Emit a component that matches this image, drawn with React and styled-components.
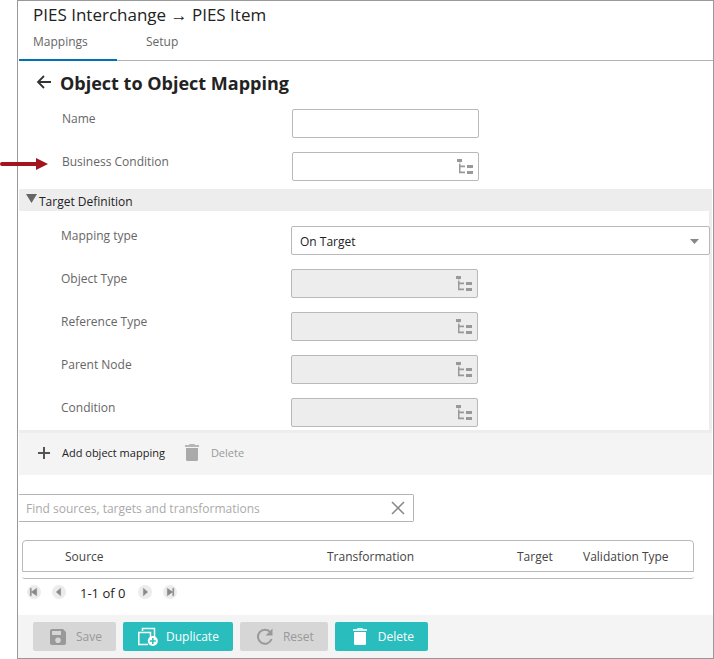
import React, { useState } from "react";
import styled, { createGlobalStyle } from "styled-components";

const GlobalStyle = createGlobalStyle`
  *, *::before, *::after { box-sizing: border-box; }
  body {
    margin: 0;
    background: #fff;
    color: #222;
    font: 12px/20px "Segoe UI", "Open Sans", sans-serif;
  }
  button, input, select { font: inherit; color: inherit; }
`;

const Page = styled.div`
  position: relative;
  padding-left: 17px;
`;

const Callout = styled.svg`
  position: absolute;
  left: 0;
  top: 157px;
  width: 48px;
  height: 14px;
`;

const Frame = styled.main`
  border: 1px solid #999;
`;

const Title = styled.h1`
  margin: 0;
  padding: 2px 15px 0;
  font-size: 17px;
  line-height: 24px;
  font-weight: 400;
`;

const Tabs = styled.nav`
  display: flex;
  height: 34px;
  margin-left: 1px;
  box-shadow: inset 0 -1px #b4b4b4;
`;

const Tab = styled.a`
  width: ${(p) => (p.$active ? "98px" : "90px")};
  padding: ${(p) => (p.$active ? "5px 14px 0" : "5px 29px 0")};
  border-bottom: ${(p) => (p.$active ? "2px solid #0071b5" : "0")};
  color: #666;
  text-decoration: none;
`;

const Heading = styled.header`
  display: flex;
  align-items: center;
  gap: 8px;
  height: 44px;
  padding: 0 18px;

  h2 {
    margin: 0;
    font-size: 18px;
    line-height: 24px;
    font-weight: 700;
  }
`;

const IconButton = styled.button`
  display: flex;
  align-items: center;
  justify-content: center;
  flex: none;
  padding: 0;
  border: 0;
  background: none;
  color: ${(p) => p.$color || "#333"};
`;

const Fields = styled.div`
  display: grid;
  gap: 14px;
  padding: ${(p) => (p.$nested ? "15px 0 3px 42px" : "4px 0 8px 44px")};
`;

const FieldRow = styled.div`
  display: grid;
  grid-template-columns: 230px minmax(0, 1fr);
  align-items: start;

  label { color: #666; }
`;

const FieldBox = styled.div`
  display: flex;
  align-items: center;
  width: ${(p) => (p.$wide ? "auto" : "187px")};
  height: 29px;
  margin-right: ${(p) => (p.$wide ? "-1px" : "0")};
  padding-right: 4px;
  border: 1px solid #b9b9b9;
  border-radius: 2px;
  background: ${(p) => (p.$disabled ? "#ededed" : "#fff")};
  position: relative;

  input,
  select {
    flex: 1;
    min-width: 0;
    height: 27px;
    padding: 2px 8px 0;
    border: 0;
    outline: 0;
    appearance: none;
    background: transparent;
  }
`;

const Caret = styled.svg`
  position: absolute;
  right: 10px;
  top: 12px;
  pointer-events: none;
`;

const Section = styled.section`
  margin: 0 1px;
  border: solid #ededed;
  border-width: 0 3px 3px 0;
`;

const SectionToggle = styled.button`
  display: flex;
  align-items: center;
  gap: 2px;
  width: calc(100% + 3px);
  height: 22px;
  padding: 3px 7px 0;
  border: 0;
  background: #ededed;

  svg { margin-bottom: 6px; }
`;

const Toolbar = styled.div`
  display: flex;
  align-items: center;
  gap: 17px;
  height: 42px;
  margin: 0 1px;
  padding: 0 16px 2px;
  background: #f4f4f4;
`;

const ToolButton = styled.button`
  display: flex;
  align-items: center;
  gap: 9px;
  padding: 0;
  border: 0;
  background: none;
  font-size: 11px;
  color: ${(p) => (p.disabled ? "#999" : "#222")};

  svg { color: ${(p) => (p.disabled ? "#aaa" : "#555")}; }
`;

const Search = styled.div`
  display: flex;
  align-items: center;
  width: 395px;
  max-width: 100%;
  height: 28px;
  margin: 19px 0 0 1px;
  padding-right: 8px;
  border: 1px solid #b4b4b4;
  border-left: 0;
  border-radius: 0 2px 2px 0;

  input {
    flex: 1;
    min-width: 0;
    padding: 2px 7px 0;
    border: 0;
    outline: 0;
    background: none;
  }
  input::placeholder { color: #aaa; opacity: 1; }
`;

const Grid = styled.div`
  margin: 18px 19px 0 4px;
`;

const Table = styled.table`
  width: 100%;
  table-layout: fixed;
  border: 1px solid #b9b9b9;
  border-radius: 4px 4px 0 0;
  border-spacing: 0;

  th {
    height: 30px;
    padding: 2px 0 0;
    font-weight: 400;
    text-align: left;
    color: #444;
  }
  th:first-child { padding-left: 42px; }
`;

const Col = styled.col`
  width: ${(p) => p.$width};
`;

const GridEnd = styled.div`
  height: 3px;
  margin-top: 4px;
  border-bottom: 1px solid #b9b9b9;
  border-radius: 0 0 4px 4px;
`;

const Pager = styled.div`
  display: flex;
  align-items: center;
  height: 26px;
  padding-left: 9px;

  output {
    margin: 2px 13px 0 14px;
    font-size: 13px;
  }
`;

const PageButton = styled.button`
  display: flex;
  padding: 0;
  border: 0;
  border-radius: 50%;
  background: #ececec;
  color: #888;

  & + & { margin-left: 11px; }
`;

const Footer = styled.footer`
  display: flex;
  gap: 7px;
  margin-top: 10px;
  padding: 7px 15px;
  background: #f4f4f4;
`;

const Action = styled.button`
  display: flex;
  align-items: center;
  gap: 8px;
  height: 29px;
  padding: 0 14px 0 15px;
  border: 0;
  border-radius: 2px;
  background: ${(p) => (p.disabled ? "#d6d6d6" : "#29bebd")};
  color: ${(p) => (p.disabled ? "#999" : "#fff")};
`;

const TreeIcon = () => (
  <svg width="18" height="17" viewBox="0 0 18 17" fill="#999" aria-hidden="true">
    <path d="M1 1h5v3H1zM3 6h1.500v1.500H9v1.700H4.500v4.300H9v1.700H3zM11 7h6v3h-6zM11 13h6v3h-6z" />
    <path d="M3 4h1.500v2H3z" opacity=".4" />
  </svg>
);

const TrashIcon = () => (
  <svg width="20" height="20" viewBox="0 0 20 20" fill="currentColor" aria-hidden="true">
    <path d="M3 2h4l.5-1h5l.5 1h4v2H3z" opacity=".85" />
    <path d="M4 5h12v11.500q0 1.500-1.500 1.500h-9q-1.500 0-1.500-1.500z" />
  </svg>
);

const pagerShapes = {
  first: "M4 4h1v7H4zM10 4v7L5 7.500z",
  previous: "M9 4v7L5 7.500z",
  next: "M6 4v7l4-3.500z",
  last: "M5 4v7l5-3.500zM10 4h1v7h-1z",
};

const PagerControl = ({ kind }) => (
  <PageButton aria-label={`${kind} page`}>
    <svg width="14" height="14" viewBox="1 1 13 13" fill="currentColor">
      <path d={pagerShapes[kind]} stroke="currentColor" strokeWidth=".4" />
    </svg>
  </PageButton>
);

function TextField({ id, label, picker, disabled }) {
  return (
    <FieldRow>
      <label htmlFor={id}>{label}</label>
      <FieldBox $disabled={disabled}>
        <input id={id} type="text" disabled={disabled} />
        {picker && (
          <IconButton aria-label={`Choose ${label}`} disabled={disabled}>
            <TreeIcon />
          </IconButton>
        )}
      </FieldBox>
    </FieldRow>
  );
}

const targetFields = [
  ["object-type", "Object Type"],
  ["reference-type", "Reference Type"],
  ["parent-node", "Parent Node"],
  ["condition", "Condition"],
];

export default function App() {
  const [open, setOpen] = useState(true);
  const [query, setQuery] = useState("");

  return (
    <Page>
      <GlobalStyle />
      <Frame>
        <Title>PIES Interchange → PIES Item</Title>
        <Tabs>
          <Tab href="#mappings" $active aria-current="page">Mappings</Tab>
          <Tab href="#setup">Setup</Tab>
        </Tabs>
        <Heading>
          <IconButton aria-label="Back">
            <svg width="16" height="16" viewBox="0 0 16 16" fill="none" stroke="currentColor" strokeWidth="1.800">
              <path d="M15 7H2M8 1L2 7l6 6" />
            </svg>
          </IconButton>
          <h2>Object to Object Mapping</h2>
        </Heading>
        <Fields>
          <TextField id="name" label="Name" />
          <TextField id="business-condition" label="Business Condition" picker />
        </Fields>
        <Section>
          <SectionToggle aria-expanded={open} onClick={() => setOpen(!open)}>
            <svg width="11" height="9" viewBox="0 0 11 9" fill="#666"><path d="M0 0h11L5.500 9z" /></svg>
            Target Definition
          </SectionToggle>
          {open && (
            <Fields $nested>
              <FieldRow>
                <label htmlFor="mapping-type">Mapping type</label>
                <FieldBox $wide>
                  <select id="mapping-type">
                    <option>On Target</option>
                  </select>
                  <Caret width="9" height="5" viewBox="0 0 9 5" fill="#888"><path d="M0 0h9L4.500 5z" /></Caret>
                </FieldBox>
              </FieldRow>
              {targetFields.map(([id, label]) => (
                <TextField key={id} id={id} label={label} picker disabled />
              ))}
            </Fields>
          )}
        </Section>
        <Toolbar>
          <ToolButton>
            <svg width="18" height="18" viewBox="0 0 18 18" stroke="currentColor" strokeWidth="2" aria-hidden="true">
              <path d="M9 3v12M3 9h12" />
            </svg>
            Add object mapping
          </ToolButton>
          <ToolButton disabled>
            <TrashIcon />
            Delete
          </ToolButton>
        </Toolbar>
        <Search>
          <input
            type="text"
            aria-label="Find sources, targets and transformations"
            placeholder="Find sources, targets and transformations"
            value={query}
            onChange={(e) => setQuery(e.target.value)}
          />
          <IconButton aria-label="Clear search" $color="#888" onClick={() => setQuery("")}>
            <svg width="14" height="14" viewBox="0 0 14 14" fill="none" stroke="currentColor" strokeWidth="1.5">
              <path d="M1 1l12 12M13 1L1 13" />
            </svg>
          </IconButton>
        </Search>
        <Grid>
          <Table>
            <colgroup>
              <Col />
              <Col $width="190px" />
              <Col $width="66px" />
              <Col $width="110px" />
            </colgroup>
            <thead>
              <tr>
                <th scope="col">Source</th>
                <th scope="col">Transformation</th>
                <th scope="col">Target</th>
                <th scope="col">Validation Type</th>
              </tr>
            </thead>
          </Table>
          <GridEnd />
        </Grid>
        <Pager>
          <PagerControl kind="first" />
          <PagerControl kind="previous" />
          <output>1-1 of 0</output>
          <PagerControl kind="next" />
          <PagerControl kind="last" />
        </Pager>
        <Footer>
          <Action disabled>
            <svg width="20" height="20" viewBox="0 0 20 20" fill="currentColor" fillRule="evenodd" aria-hidden="true">
              <path d="M4 2h11l3 3v11q0 2-2 2H4q-2 0-2-2V4q0-2 2-2zM4 4v4h9V4zM10 10.500a2.800 2.800 0 1 0 0 5.600a2.800 2.800 0 1 0 0-5.600z" />
            </svg>
            Save
          </Action>
          <Action>
            <svg width="20" height="20" viewBox="1 0 20 20" fill="none" stroke="currentColor" strokeWidth="1.500" aria-hidden="true">
              <path d="M5.500 4V1.500h12V11M11 17.500H1.800v-12h11.700v5" />
              <circle cx="15.800" cy="14" r="5" fill="#fff" stroke="none" />
              <path d="M12.800 14h6M15.800 11v6" stroke="#29bebd" />
            </svg>
            Duplicate
          </Action>
          <Action disabled>
            <svg width="20" height="20" viewBox="0 0 20 20" fill="none" stroke="currentColor" strokeWidth="2" aria-hidden="true">
              <path d="M15.500 5.500A7 7 0 1 0 16.600 12" />
              <path d="M17.500 1.500v7h-7z" fill="currentColor" stroke="none" />
            </svg>
            Reset
          </Action>
          <Action>
            <TrashIcon />
            Delete
          </Action>
        </Footer>
      </Frame>
      <Callout viewBox="0 0 48 14" aria-hidden="true">
        <path d="M2 7h36" stroke="#a2151f" strokeWidth="4" strokeLinecap="round" />
        <path d="M36 1l12 6-12 6z" fill="#a2151f" />
      </Callout>
    </Page>
  );
}
